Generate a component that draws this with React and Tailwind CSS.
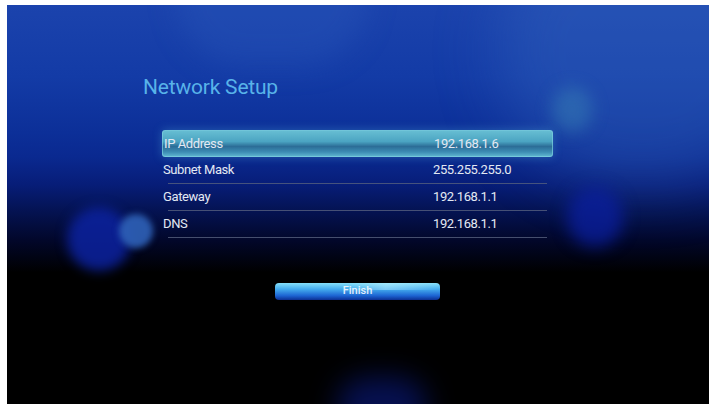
import React from 'react';

const rows = [
  { label: 'IP Address', value: '192.168.1.6', active: true },
  { label: 'Subnet Mask', value: '255.255.255.0' },
  { label: 'Gateway', value: '192.168.1.1' },
  { label: 'DNS', value: '192.168.1.1' },
];

const SettingRow = ({ label, value, active }) => (
  <div className="relative flex flex-col h-[27px]">
    <div
      className={`flex flex-1 items-center ${
        active
          ? 'rounded-[3px] border border-[#7ccfe0]/70 bg-[linear-gradient(to_bottom,#66bdd2_0%,#4ba4c2_42%,#2c6d97_62%,#3d8db4_84%,#5cb2cd_100%)] shadow-[0_0_10px_rgba(90,190,220,0.35)]'
          : ''
      }`}
    >
      <span className="w-[271px] pl-[1px] text-[#e3e9f3]">{label}</span>
      <span className="text-[#e3e9f3]">{value}</span>
    </div>
    {!active && <div className="mx-[6px] h-px bg-[#56607e]/80" />}
  </div>
);

const App = () => {
  return (
    <div className="flex w-[709px] h-[404px] bg-white pl-[7px] pt-[5px]">
      <div className="relative flex-1 overflow-hidden bg-[linear-gradient(to_bottom,#1b43ad_0%,#133ba6_18%,#0c2f98_32%,#0a2990_38%,#071d78_45%,#041250_52%,#02072a_59%,#000000_67%,#000000_100%)]">
        {/* bokeh / glow */}
        <div className="absolute left-[490px] -top-[90px] w-[290px] h-[270px] rounded-full bg-[#3a6cc4]/35 blur-[30px]" />
        <div className="absolute left-[170px] -top-[70px] w-[190px] h-[130px] rounded-full bg-[#2a58bb]/35 blur-[14px]" />
        <div className="absolute left-[545px] top-[82px] w-[40px] h-[45px] rounded-full bg-[#3e8eb8]/40 blur-[8px]" />
        <div className="absolute left-[560px] top-[182px] w-[56px] h-[60px] rounded-full bg-[#0b1fa0]/75 blur-[8px]" />
        <div className="absolute left-[60px] top-[202px] w-[64px] h-[64px] rounded-full bg-[#0c22a0]/85 blur-[6px]" />
        <div className="absolute left-[112px] top-[209px] w-[34px] h-[34px] rounded-full bg-[#2f62b8]/90 blur-[3px]" />
        <div className="absolute left-[330px] top-[372px] w-[90px] h-[60px] rounded-full bg-[#0a1a85]/60 blur-[14px]" />

        <div className="relative flex flex-col font-['Roboto','Liberation_Sans',sans-serif]">
          <h1 className="ml-[136px] mt-[69px] text-[21px] leading-[27px] text-[#58b3e9] tracking-[-0.2px]">
            Network Setup
          </h1>

          <div className="ml-[155px] mt-[29px] flex w-[391px] flex-col text-[13px] tracking-[-0.4px]">
            {rows.map((row) => (
              <SettingRow key={row.label} {...row} />
            ))}
          </div>

          <div className="ml-[155px] mt-[45px] flex w-[391px] justify-center">
            <button className="relative flex h-[17px] w-[165px] items-center justify-center overflow-hidden rounded-[4px] bg-[linear-gradient(to_bottom,#86e0fa_0%,#45aeef_35%,#1c63d2_75%,#0c2f92_100%)] text-[11px] font-medium text-white/85">
              <span className="absolute right-0 top-0 h-[7px] w-[90px] bg-[linear-gradient(100deg,transparent_0%,rgba(200,245,255,0.45)_40%,transparent_100%)]" />
              <span className="relative">Finish</span>
            </button>
          </div>
        </div>
      </div>
    </div>
  );
};

export default App;
